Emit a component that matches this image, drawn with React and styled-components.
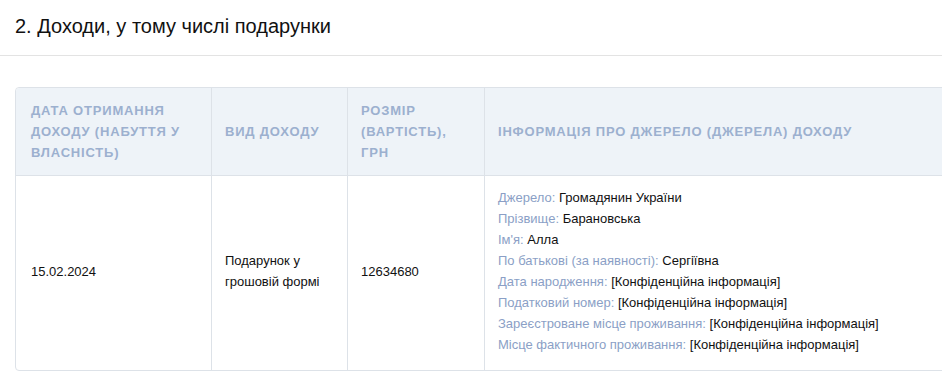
import styled, {createGlobalStyle} from 'styled-components'

const GlobalStyle = createGlobalStyle`
  body {
    margin: 0;
    background: #fff;
    font-family: 'Liberation Sans', Arial, sans-serif;
    overflow: hidden;
  }
`

const Section = styled.section`
  width: 942px;
  overflow: hidden;
`

const SectionHead = styled.div`
  height: 56px;
  box-sizing: border-box;
  display: flex;
  align-items: center;
  padding: 0 15px 2px;
  border-bottom: 1px solid #e3e3e3;
`

const Title = styled.h2`
  margin: 0;
  font-size: 20px;
  font-weight: normal;
  color: #111;
`

const TableWrap = styled.div`
  padding: 31px 0 0 15px;
`

const Table = styled.table`
  width: 990px;
  border-collapse: separate;
  border-spacing: 0;
  border: 1px solid #dde2e8;
  border-radius: 4px;
  table-layout: fixed;
`

const Th = styled.th`
  box-sizing: border-box;
  width: ${props => props.w || 'auto'};
  background: #eef3f8;
  color: #9cb0cf;
  font-size: 13px;
  font-weight: bold;
  letter-spacing: 0.8px;
  line-height: 21px;
  text-transform: uppercase;
  text-align: left;
  vertical-align: middle;
  padding: 12px 10px 12px ${props => props.pl || '13px'};
  border-bottom: 1px solid #dde2e8;
  border-left: ${props => (props.first ? 'none' : '1px solid #dde2e8')};
  &:first-child {
    border-top-left-radius: 4px;
  }
`

const Td = styled.td`
  box-sizing: border-box;
  color: #111;
  font-size: 13px;
  line-height: 21px;
  vertical-align: middle;
  padding: 11px 10px 15px ${props => props.pl || '13px'};
  border-left: ${props => (props.first ? 'none' : '1px solid #dde2e8')};
`

const InfoLine = styled.div`
  white-space: nowrap;
`

const Label = styled.span`
  color: #8b9fc6;
`

const sourceInfo = [
  ['Джерело', 'Громадянин України'],
  ['Прізвище', 'Барановська'],
  ["Ім'я", 'Алла'],
  ['По батькові (за наявності)', 'Сергіївна'],
  ['Дата народження', '[Конфіденційна інформація]'],
  ['Податковий номер', '[Конфіденційна інформація]'],
  ['Зареєстроване місце проживання', '[Конфіденційна інформація]'],
  ['Місце фактичного проживання', '[Конфіденційна інформація]'],
]

const App = () => (
  <>
    <GlobalStyle />
    <Section>
      <SectionHead>
        <Title>2. Доходи, у тому числі подарунки</Title>
      </SectionHead>
      <TableWrap>
        <Table>
          <thead>
            <tr>
              <Th first w="195px" pl="15px">
                Дата отримання доходу (набуття у власність)
              </Th>
              <Th w="136px">Вид доходу</Th>
              <Th w="137px">Розмір (вартість), грн</Th>
              <Th>Інформація про джерело (джерела) доходу</Th>
            </tr>
          </thead>
          <tbody>
            <tr>
              <Td first pl="15px">15.02.2024</Td>
              <Td>
                Подарунок у
                <br />
                грошовій формі
              </Td>
              <Td>12634680</Td>
              <Td>
                {sourceInfo.map(([label, value]) => (
                  <InfoLine key={label}>
                    <Label>{label}:</Label> {value}
                  </InfoLine>
                ))}
              </Td>
            </tr>
          </tbody>
        </Table>
      </TableWrap>
    </Section>
  </>
)

export default App
